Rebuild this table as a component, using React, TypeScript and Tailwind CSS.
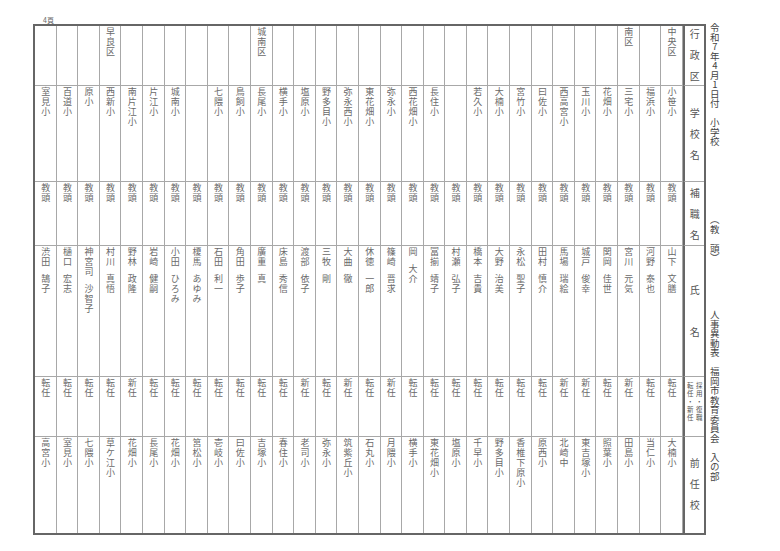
import React from 'react'

// 人事異動表（入の部） — columns are listed in reading order, right to left
type Row = {
  ward: string
  school: string
  post: string
  surname: string
  given: string
  kind: string
  prev: string
}

const ROWS: Row[] = [
  { ward: '中央区', school: '小笹小', post: '教頭', surname: '山下', given: '文膳', kind: '転任', prev: '大楠小' },
  { ward: '', school: '福浜小', post: '教頭', surname: '河野', given: '泰也', kind: '転任', prev: '当仁小' },
  { ward: '南区', school: '三宅小', post: '教頭', surname: '宮川', given: '元気', kind: '新任', prev: '田島小' },
  { ward: '', school: '花畑小', post: '教頭', surname: '関岡', given: '佳世', kind: '転任', prev: '照葉小' },
  { ward: '', school: '玉川小', post: '教頭', surname: '城戸', given: '俊幸', kind: '新任', prev: '東吉塚小' },
  { ward: '', school: '西高宮小', post: '教頭', surname: '馬場', given: '瑞絵', kind: '新任', prev: '北崎中' },
  { ward: '', school: '曰佐小', post: '教頭', surname: '田村', given: '慎介', kind: '転任', prev: '原西小' },
  { ward: '', school: '宮竹小', post: '教頭', surname: '永松', given: '聖子', kind: '転任', prev: '香椎下原小' },
  { ward: '', school: '大楠小', post: '教頭', surname: '大野', given: '治美', kind: '転任', prev: '野多目小' },
  { ward: '', school: '若久小', post: '教頭', surname: '橋本', given: '吉貴', kind: '転任', prev: '千早小' },
  { ward: '', school: '', post: '教頭', surname: '村瀬', given: '弘子', kind: '転任', prev: '塩原小' },
  { ward: '', school: '長住小', post: '教頭', surname: '冨揃', given: '靖子', kind: '転任', prev: '東花畑小' },
  { ward: '', school: '西花畑小', post: '教頭', surname: '岡', given: '大介', kind: '転任', prev: '横手小' },
  { ward: '', school: '弥永小', post: '教頭', surname: '篠崎', given: '晋求', kind: '新任', prev: '月隈小' },
  { ward: '', school: '東花畑小', post: '教頭', surname: '休徳', given: '一郎', kind: '転任', prev: '石丸小' },
  { ward: '', school: '弥永西小', post: '教頭', surname: '大曲', given: '徹', kind: '新任', prev: '筑紫丘小' },
  { ward: '', school: '野多目小', post: '教頭', surname: '三牧', given: '剛', kind: '転任', prev: '弥永小' },
  { ward: '', school: '塩原小', post: '教頭', surname: '渡部', given: '依子', kind: '新任', prev: '老司小' },
  { ward: '', school: '横手小', post: '教頭', surname: '床島', given: '秀信', kind: '転任', prev: '春住小' },
  { ward: '城南区', school: '長尾小', post: '教頭', surname: '廣重', given: '真', kind: '転任', prev: '吉塚小' },
  { ward: '', school: '鳥飼小', post: '教頭', surname: '角田', given: '歩子', kind: '転任', prev: '曰佐小' },
  { ward: '', school: '七隈小', post: '教頭', surname: '石田', given: '利一', kind: '転任', prev: '壱岐小' },
  { ward: '', school: '', post: '教頭', surname: '榎馬', given: 'あゆみ', kind: '転任', prev: '筥松小' },
  { ward: '', school: '城南小', post: '教頭', surname: '小田', given: 'ひろみ', kind: '転任', prev: '花畑小' },
  { ward: '', school: '片江小', post: '教頭', surname: '岩崎', given: '健嗣', kind: '転任', prev: '長尾小' },
  { ward: '', school: '南片江小', post: '教頭', surname: '野林', given: '政隆', kind: '新任', prev: '花畑小' },
  { ward: '早良区', school: '西新小', post: '教頭', surname: '村川', given: '真悟', kind: '転任', prev: '草ケ江小' },
  { ward: '', school: '原小', post: '教頭', surname: '神宮司', given: '沙智子', kind: '転任', prev: '七隈小' },
  { ward: '', school: '百道小', post: '教頭', surname: '樋口', given: '宏志', kind: '転任', prev: '室見小' },
  { ward: '', school: '室見小', post: '教頭', surname: '渋田', given: '鵠子', kind: '転任', prev: '高宮小' },
]

const vert = 'block whitespace-nowrap [writing-mode:vertical-rl] [text-orientation:upright]'

function V({ text, className = '' }: { text: string; className?: string }) {
  return <span className={`${vert} ${className}`}>{text}</span>
}

// spaced header label: the spacing sits between characters only
function Label({ text, spacing }: { text: string; spacing: string }) {
  return (
    <span className={`${vert} ${spacing}`}>
      {text.slice(0, -1)}
      <span className="tracking-normal">{text.slice(-1)}</span>
    </span>
  )
}

const cell = 'flex flex-col items-center pt-[1px] border-r border-[#a8a8a8] text-[9px] leading-[10px] tracking-[1px]'
const head = 'flex flex-col items-center border-l-2 border-[#666] text-[10px] leading-[12px] text-[#555]'

export default function App() {
  const cols = [...ROWS].reverse()

  return (
    <div className="w-[780px] h-[551px] bg-white text-[#6a6a6a] font-['Noto_Sans_CJK_JP','Noto_Sans',sans-serif] pl-[33px] pt-[16px] [transform:translateZ(0)]">
      <div className="h-[8px] pl-[10px] text-[7px] leading-[8px]">4頁</div>

      <div className="flex">
        <div className="grid grid-flow-col grid-rows-[60px_96px_64px_131px_60px_96px] grid-cols-[repeat(30,21.6px)_21px] border-2 border-[#666]">
          {cols.map((r, i) => (
            <React.Fragment key={i}>
              <div className={`${cell} border-b`}><V text={r.ward} /></div>
              <div className={`${cell} border-b`}><V text={r.school} /></div>
              <div className={`${cell} border-b`}><V text={r.post} /></div>
              <div className={`${cell} border-b gap-[7px]`}>
                <V text={r.surname} />
                <V text={r.given} />
              </div>
              <div className={`${cell} border-b`}><V text={r.kind} /></div>
              <div className={cell}><V text={r.prev} /></div>
            </React.Fragment>
          ))}

          {/* header column */}
          <div className={`${head} border-b border-b-[#a8a8a8] pt-[3px]`}><Label text="行政区" spacing="tracking-[11px]" /></div>
          <div className={`${head} border-b border-b-[#a8a8a8] pt-[22px]`}><Label text="学校名" spacing="tracking-[11px]" /></div>
          <div className={`${head} border-b border-b-[#a8a8a8] pt-[6px]`}><Label text="補職名" spacing="tracking-[11px]" /></div>
          <div className={`${head} border-b border-b-[#a8a8a8] pt-[39px]`}><Label text="氏名" spacing="tracking-[32px]" /></div>
          <div className={`${head} border-b border-b-[#a8a8a8] pt-[5px]`}>
            <span className={`${vert} text-[6.5px] leading-[9px] tracking-[1.5px]`}>
              採用・復職<br />転任・新任
            </span>
          </div>
          <div className={`${head} pt-[21px]`}><Label text="前任校" spacing="tracking-[11px]" /></div>
        </div>

        <div className="w-[18px] flex flex-col items-center text-[9.5px] leading-[12px] text-[#444]">
          <V text="令和7年4月1日付　小学校" className="-mt-[1px]" />
          <V text="（教　頭）" className="mt-[68px]" />
          <V text="人事異動表　福岡市教育委員会　入の部" className="mt-[48px]" />
        </div>
      </div>
    </div>
  )
}
